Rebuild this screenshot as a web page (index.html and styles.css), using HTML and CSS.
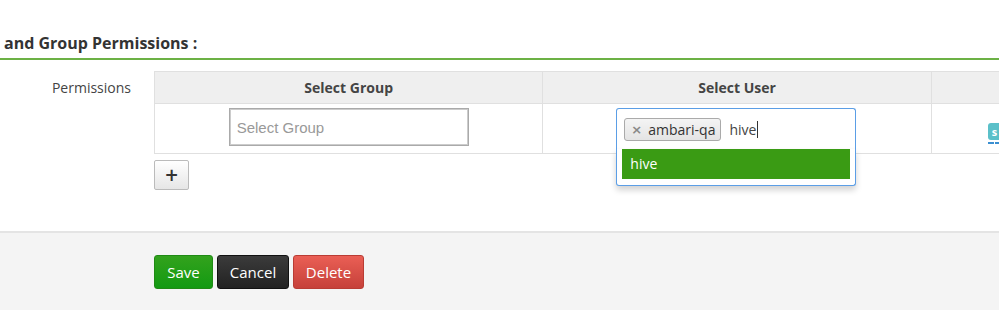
FILE: index.html
```html
<!DOCTYPE html>
<html lang="en">
<head>
    <meta charset="UTF-8">
    <title>Policy permissions</title>
    <link rel="stylesheet" href="styles.css">
</head>
<body>
    <h4 class="section-title">and Group Permissions :</h4>

    <div class="perm-row">
        <label class="perm-label">Permissions</label>
        <div class="perm-body">
            <table class="perm-table">
                <thead>
                    <tr>
                        <th>Select Group</th>
                        <th>Select User</th>
                        <th></th>
                    </tr>
                </thead>
                <tbody>
                    <tr>
                        <td class="center">
                            <input class="group-input" type="text" placeholder="Select Group">
                        </td>
                        <td class="center">
                            <div class="user-select">
                                <ul class="choices">
                                    <li class="choice"><span class="choice-close">&times;</span>ambari-qa</li>
                                    <li class="search">hive<span class="caret"></span></li>
                                </ul>
                                <ul class="results">
                                    <li class="result active">hive</li>
                                </ul>
                            </div>
                        </td>
                        <td class="perm-cell">
                            <a class="perm-link" href="javascript:;"><span class="perm-label-tag">s</span></a>
                        </td>
                    </tr>
                </tbody>
            </table>
            <button class="btn-add" type="button">+</button>
        </div>
    </div>

    <div class="form-actions">
        <button class="btn btn-save" type="button">Save</button>
        <button class="btn btn-cancel" type="button">Cancel</button>
        <button class="btn btn-delete" type="button">Delete</button>
    </div>
</body>
</html>
```

FILE: styles.css
```css
*{
    margin: 0;
    padding: 0;
    box-sizing: border-box;
}
ul{
    list-style: none;
}
body{
    font-family: "Open Sans", sans-serif;
    font-size: 14px;
    color: #333;
    background-color: #fff;
    overflow: hidden;
}
.section-title{
    font-size: 16px;
    font-weight: 700;
    padding: 33px 0 5px 4px;
    line-height: 20px;
    border-bottom: 2px solid #6cb145;
}
.perm-row{
    display: flex;
    margin-top: 11px;
}
.perm-label{
    flex: 0 0 154px;
    text-align: right;
    padding-right: 23px;
    line-height: 33px;
    color: #444;
}
.perm-body{
    flex: none;
}
.perm-table{
    border-collapse: collapse;
    table-layout: fixed;
    width: 1166px;
}
.perm-table th,
.perm-table td{
    border: 1px solid #e0e0e0;
    width: 388px;
}
.perm-table th{
    height: 32px;
    background-color: #efefef;
    font-weight: 700;
    color: #444;
}
.perm-table td{
    height: 49px;
    padding: 4px 0;
    vertical-align: top;
}
.center{
    text-align: center;
}
.group-input{
    width: 240px;
    height: 38px;
    border: 1px solid #aaa;
    box-shadow: inset 0 0 0 1px #ccc;
    padding: 0 7px;
    font-family: "Liberation Sans", Arial, sans-serif;
    font-size: 15px;
    outline: none;
}
.group-input::placeholder{
    color: #999;
}
.user-select{
    position: relative;
    width: 240px;
    margin: 0 0 0 73px;
    text-align: left;
}
.choices{
    display: flex;
    align-items: center;
    height: 41px;
    padding: 0 7px;
    border: 1px solid #5b9ee6;
    border-bottom: none;
    border-radius: 3px 3px 0 0;
    background-color: #fff;
}
.choice{
    display: flex;
    align-items: center;
    height: 23px;
    padding: 0 5px 0 6px;
    border: 1px solid #aaa;
    border-radius: 3px;
    background: linear-gradient(#f4f4f4, #e4e4e4);
    color: #333;
}
.choice-close{
    font-family: "DejaVu Sans", sans-serif;
    font-size: 13px;
    font-weight: 700;
    color: #888;
    margin-right: 6px;
}
.search{
    display: flex;
    align-items: center;
    margin-left: 8px;
    color: #444;
}
.caret{
    display: inline-block;
    width: 1px;
    height: 17px;
    background-color: #333;
    margin-left: 1px;
}
.results{
    position: absolute;
    top: 41px;
    left: 0;
    width: 240px;
    padding: 0 5px 6px;
    border: 1px solid #5b9ee6;
    border-top: none;
    border-radius: 0 0 3px 3px;
    background-color: #fff;
    box-shadow: 0 4px 6px rgba(0, 0, 0, 0.18);
}
.result{
    height: 30px;
    line-height: 29px;
    padding-left: 8px;
}
.result.active{
    background-color: #3a9b14;
    color: #fff;
}
.perm-cell{
    padding-left: 56px !important;
}
.perm-link{
    display: inline-block;
    margin-top: 13px;
    padding-bottom: 2px;
    border-bottom: 2px dashed #3a8fd1;
    text-decoration: none;
}
.perm-label-tag{
    display: inline-block;
    height: 17px;
    width: 20px;
    padding-left: 4px;
    border-radius: 3px;
    background-color: #5bc0c9;
    color: #fff;
    font-size: 11px;
    font-weight: 700;
    line-height: 17px;
}
.btn-add{
    display: block;
    width: 35px;
    height: 30px;
    margin-top: 6px;
    border: 1px solid #bbb;
    border-radius: 2px;
    background: linear-gradient(#fff, #e6e6e6);
    font-family: "DejaVu Sans", sans-serif;
    font-size: 17px;
    font-weight: 700;
    color: #333;
}
.form-actions{
    display: flex;
    gap: 4px;
    margin-top: 41px;
    padding: 22px 0 21px 154px;
    border-top: 2px solid #e4e4e4;
    background-color: #f4f4f4;
}
.btn{
    height: 34px;
    padding: 0 8px;
    border-radius: 3px;
    font-family: "Open Sans", sans-serif;
    font-size: 15px;
    font-weight: 500;
    color: #fff;
}
.btn-save{
    width: 59px;
    border: 1px solid #1f8a14;
    background: linear-gradient(#33a21d, #139a12);
}
.btn-cancel{
    width: 72px;
    border: 1px solid #111;
    background: linear-gradient(#3b3b3b, #222);
}
.btn-delete{
    width: 71px;
    border: 1px solid #b93c34;
    background: linear-gradient(#ea5f55, #c6413a);
}
```
